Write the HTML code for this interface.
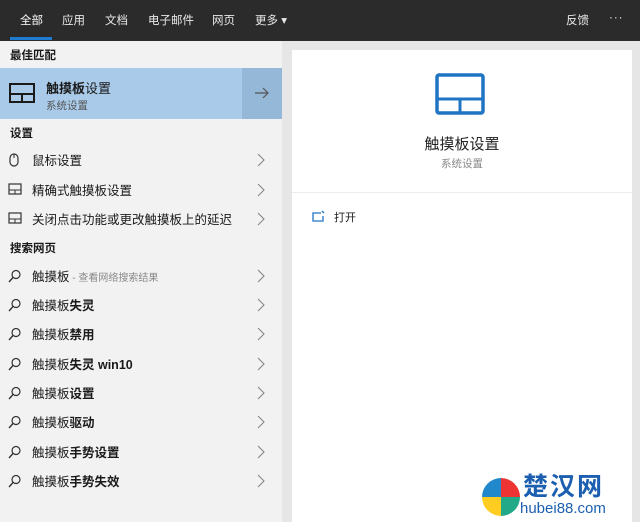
<!DOCTYPE html>
<html><head><meta charset="utf-8"><style>
*{margin:0;padding:0;box-sizing:border-box}
body{width:640px;height:522px;overflow:hidden;background:#e6e6e6;font-family:"Liberation Sans","Noto Sans CJK SC",sans-serif;font-size:12px;color:#1a1a1a;position:relative}
.top{position:absolute;left:0;top:0;width:640px;height:41px;background:#2b2b2b;color:#e8e8e8}
.top span{position:absolute;top:12px;font-size:11.5px}
.ul{position:absolute;left:10px;top:37px;width:42px;height:3px;background:#1f7bd0}
.left{position:absolute;left:0;top:41px;width:282px;height:481px;background:#f2f2f2}
.lab{position:absolute;left:10px;font-weight:bold;font-size:11.5px}
.row{position:absolute;left:0;width:282px;height:29px}
.row .t{position:absolute;left:32px;top:4px;font-size:12.5px}
.row .ic{position:absolute;left:8px;top:7px}
.row .ch{position:absolute;left:256px;top:7px}
.card{position:absolute;left:292px;top:50px;width:340px;height:472px;background:#fff}
.g{color:#888;font-size:10.5px}
</style></head><body>
<div class="top">
<span style="left:20px;color:#fff">全部</span>
<span style="left:62px">应用</span>
<span style="left:105px">文档</span>
<span style="left:148px">电子邮件</span>
<span style="left:212px">网页</span>
<span style="left:255px">更多 ▾</span>
<span style="left:566px">反馈</span>
<span style="left:609px;letter-spacing:1px">···</span>
<div class="ul"></div>
</div>
<div class="left">
<div class="lab" style="top:6px">最佳匹配</div>
<div style="position:absolute;left:0;top:27px;width:242px;height:51px;background:#a9cbe9"></div>
<div style="position:absolute;left:242px;top:27px;width:40px;height:51px;background:#95b8d8"></div>
<svg style="position:absolute;left:9px;top:42px" width="26" height="20"><rect x="1" y="1" width="24" height="18" fill="none" stroke="#1a1a1a" stroke-width="2"/><path d="M1 11H25M13 11V19" stroke="#1a1a1a" stroke-width="2"/></svg>
<div style="position:absolute;left:46px;top:37px;font-size:13px"><b>触摸板</b>设置</div>
<div style="position:absolute;left:46px;top:57px;font-size:10.5px;color:#555">系统设置</div>
<svg style="position:absolute;left:254px;top:45px" width="16" height="14"><path d="M1 7H14M9 2l5 5-5 5" stroke="#555" fill="none" stroke-width="1.2"/></svg>
<div class="lab" style="top:84px">设置</div>
</div>
<div id="rows"></div>
<div class="card">
<svg style="position:absolute;left:143px;top:23px" width="50" height="42"><rect x="2" y="2" width="46" height="38" rx="2" fill="none" stroke="#1f74c4" stroke-width="3.5"/><path d="M2 26H48M25 26V40" stroke="#1f74c4" stroke-width="3"/></svg>
<div style="position:absolute;left:0;width:340px;top:83px;text-align:center;font-size:15px;color:#222">触摸板设置</div>
<div style="position:absolute;left:0;width:340px;top:106px;text-align:center" class="g">系统设置</div>
<div style="position:absolute;left:0;top:142px;width:340px;height:1px;background:#ececec"></div>
<svg style="position:absolute;left:20px;top:160px" width="14" height="12"><path d="M9 3H1V11H11V6M10 1l2 2" stroke="#1f74c4" fill="none" stroke-width="1.3"/></svg>
<div style="position:absolute;left:42px;top:159px;font-size:11px">打开</div>
</div>
<div style="position:absolute;left:482px;top:478px;width:38px;height:38px;border-radius:50%;background:conic-gradient(#e33 0 25%,#2a8 0 50%,#fc2 0 75%,#28c 0);"></div>
<div style="position:absolute;left:523px;top:472px;font-size:25px;line-height:30px;font-weight:bold;color:#1c5fb0;letter-spacing:2px">楚汉网</div>
<div style="position:absolute;left:520px;top:500px;font-size:15px;line-height:18px;color:#1c5fb0">hubei88.com</div>
<script>
var r=[[160,'m','鼠标设置'],[190,'p','精确式触摸板设置'],[219,'p','关闭点击功能或更改触摸板上的延迟'],
[276,'s','触摸板<span style="color:#888;font-size:10px"> - 查看网络搜索结果</span>'],[305,'s','触摸板<b>失灵</b>'],[334,'s','触摸板<b>禁用</b>'],[364,'s','触摸板<b>失灵 win10</b>'],[393,'s','触摸板<b>设置</b>'],[422,'s','触摸板<b>驱动</b>'],[452,'s','触摸板<b>手势设置</b>'],[481,'s','触摸板<b>手势失效</b>']];
var ic={m:'<svg class="ic" width="12" height="14"><rect x="2" y="1" width="8" height="12" rx="4" fill="none" stroke="#333" stroke-width="1.2"/><path d="M6 1V5" stroke="#333"/></svg>',
p:'<svg class="ic" width="14" height="12"><rect x="1" y="1" width="12" height="10" fill="none" stroke="#333" stroke-width="1.2"/><path d="M1 7H13M7 7V11" stroke="#333"/></svg>',
s:'<svg class="ic" width="14" height="14"><circle cx="8" cy="5.5" r="4" fill="none" stroke="#333" stroke-width="1.2"/><path d="M5 8.5L1 13" stroke="#333" stroke-width="1.4"/></svg>'};
var h='';r.forEach(function(a){h+='<div class="row" style="top:'+(a[0]-14)+'px">'+ic[a[1]]+'<div class="t">'+a[2]+'</div><svg class="ch" width="10" height="14"><path d="M2 1l6 6-6 6" stroke="#888" fill="none" stroke-width="1.1"/></svg></div>';});
h+='<div class="lab" style="top:240px;position:absolute;left:10px">搜索网页</div>';
document.getElementById('rows').innerHTML=h;
</script>
</body></html>
